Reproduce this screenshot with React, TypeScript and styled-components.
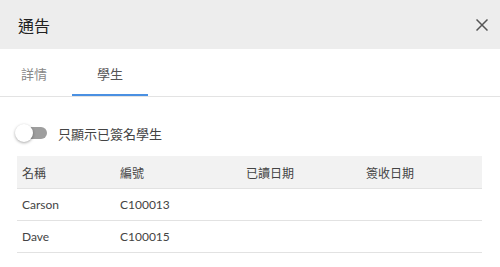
import styled, { createGlobalStyle } from "styled-components"

const GlobalStyle = createGlobalStyle`
    body {
        margin: 0;
        background: #fff;
        font-family: Lato, "Noto Sans CJK TC", sans-serif;
        color: #333;
    }
`;

const students = [
    { name: "Carson", id: "C100013", read: "", signed: "" },
    { name: "Dave", id: "C100015", read: "", signed: "" },
];

const App = () => {
    return (
        <Dialog>
            <GlobalStyle />
            <Header>
                <Title>通告</Title>
                <CloseButton aria-label="close">
                    <svg width="12" height="12" viewBox="0 0 12 12">
                        <path d="M0.5 0.5 L11.5 11.5 M11.5 0.5 L0.5 11.5" stroke="#555" strokeWidth="1.5" fill="none" />
                    </svg>
                </CloseButton>
            </Header>

            <Tabs>
                <Tab>詳情</Tab>
                <Tab active>學生</Tab>
            </Tabs>

            <Body>
                <ToggleRow>
                    <Switch>
                        <Track />
                        <Thumb />
                    </Switch>
                    <ToggleLabel>只顯示已簽名學生</ToggleLabel>
                </ToggleRow>

                <Table>
                    <colgroup>
                        <col style={{ width: 98 }} />
                        <col style={{ width: 126 }} />
                        <col style={{ width: 120 }} />
                        <col />
                    </colgroup>
                    <thead>
                        <tr>
                            <Th>名稱</Th>
                            <Th>編號</Th>
                            <Th>已讀日期</Th>
                            <Th>簽收日期</Th>
                        </tr>
                    </thead>
                    <tbody>
                        {students.map(s => (
                            <tr key={s.id}>
                                <Td>{s.name}</Td>
                                <Td>{s.id}</Td>
                                <Td>{s.read}</Td>
                                <Td>{s.signed}</Td>
                            </tr>
                        ))}
                    </tbody>
                </Table>
            </Body>
        </Dialog>
    )
}

export default App


// Dialog Styles
const Dialog = styled.div`
    width: 500px;
    height: 267px;
    background: #fff;
    overflow: hidden;
`;

const Header = styled.div`
    height: 49px;
    background: #ededed;
    display: flex;
    align-items: center;
    justify-content: space-between;
    padding: 0 12px 0 18px;
`;

const Title = styled.h2`
    margin: 0;
    font-size: 16px;
    font-weight: 400;
    color: #222;
`;

const CloseButton = styled.button`
    border: none;
    background: none;
    padding: 0;
    width: 12px;
    height: 12px;
    display: flex;
    cursor: pointer;
`;

const Tabs = styled.div`
    height: 47px;
    display: flex;
    border-bottom: 1px solid #e3e3e3;
`;

const Tab = styled.div<{ active?: boolean }>`
    width: 76px;
    display: flex;
    align-items: center;
    justify-content: center;
    padding-top: 4px;
    font-size: 13px;
    color: ${p => (p.active ? "#555" : "#888")};
    border-bottom: 2px solid ${p => (p.active ? "#4a90e2" : "transparent")};
    &:first-child {
        margin-left: -4px;
    }
`;

const Body = styled.div`
    padding: 24px 18px 0 17px;
`;

const ToggleRow = styled.div`
    display: flex;
    align-items: center;
    gap: 11px;
    height: 24px;
    margin-bottom: 11px;
`;

const Switch = styled.div`
    position: relative;
    width: 30px;
    height: 18px;
`;

const Track = styled.div`
    position: absolute;
    left: 2px;
    right: 0;
    top: 3px;
    height: 12px;
    border-radius: 6px;
    background: #9e9e9e;
`;

const Thumb = styled.div`
    position: absolute;
    left: -2px;
    top: 0;
    width: 18px;
    height: 18px;
    border-radius: 50%;
    background: #fff;
    box-shadow: 0 1px 3px rgba(0, 0, 0, 0.35);
`;

const ToggleLabel = styled.span`
    font-size: 13px;
    color: #444;
`;

const Table = styled.table`
    width: 465px;
    table-layout: fixed;
    border-collapse: collapse;
    font-size: 12px;
    color: #444;
`;

const Th = styled.th`
    background: #f2f2f2;
    height: 32px;
    padding: 0 5px;
    text-align: left;
    font-weight: 400;
    border-bottom: 1px solid #e2e2e2;
`;

const Td = styled.td`
    height: 31px;
    padding: 0 5px;
    border-bottom: 1px solid #e2e2e2;
`;
